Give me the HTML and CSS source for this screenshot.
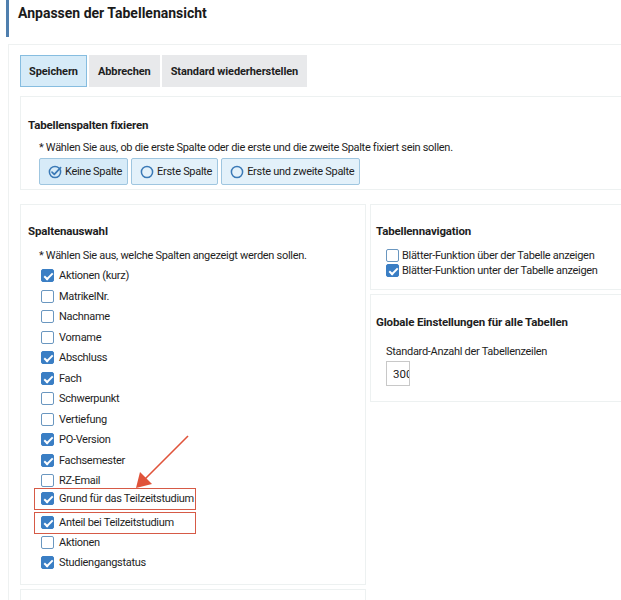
FILE: index.html
```html
<!DOCTYPE html>
<html lang="de">
<head>
<meta charset="utf-8">
<link rel="stylesheet" href="styles.css">
</head>
<body>
<header class="page-head"><h1>Anpassen der Tabellenansicht</h1></header>
<main class="outer">
  <div class="toolbar">
    <button class="btn btn-primary">Speichern</button>
    <button class="btn">Abbrechen</button>
    <button class="btn">Standard wiederherstellen</button>
  </div>
  <section class="panel panel-fix">
    <h2>Tabellenspalten fixieren</h2>
    <p class="hint">* Wählen Sie aus, ob die erste Spalte oder die erste und die zweite Spalte fixiert sein sollen.</p>
    <div class="radios">
      <span class="radio active"><svg class="ri" viewBox="0 0 14 14" width="14" height="14"><circle cx="7" cy="7" r="5.6" fill="none" stroke="#3a79b6" stroke-width="1.5"/><path d="M4 7.2 L6.3 9.4 L12.6 2.6" fill="none" stroke="#3a79b6" stroke-width="1.7" stroke-linecap="round" stroke-linejoin="round"/></svg>Keine Spalte</span>
      <span class="radio"><svg class="ri" viewBox="0 0 14 14" width="14" height="14"><circle cx="7" cy="7" r="5.6" fill="none" stroke="#3a79b6" stroke-width="1.5"/></svg>Erste Spalte</span>
      <span class="radio"><svg class="ri" viewBox="0 0 14 14" width="14" height="14"><circle cx="7" cy="7" r="5.6" fill="none" stroke="#3a79b6" stroke-width="1.5"/></svg>Erste und zweite Spalte</span>
    </div>
  </section>
  <div class="cols">
    <section class="panel panel-cols">
      <h2>Spaltenauswahl</h2>
      <p class="hint">* Wählen Sie aus, welche Spalten angezeigt werden sollen.</p>
      <ul class="checks">
        <li><span class="cb on"></span>Aktionen (kurz)</li>
        <li><span class="cb"></span>MatrikelNr.</li>
        <li><span class="cb"></span>Nachname</li>
        <li><span class="cb"></span>Vorname</li>
        <li><span class="cb on"></span>Abschluss</li>
        <li><span class="cb on"></span>Fach</li>
        <li><span class="cb"></span>Schwerpunkt</li>
        <li><span class="cb"></span>Vertiefung</li>
        <li><span class="cb on"></span>PO-Version</li>
        <li><span class="cb on"></span>Fachsemester</li>
        <li><span class="cb"></span>RZ-Email</li>
        <li class="marked marked1"><span class="cb on"></span>Grund für das Teilzeitstudium</li>
        <li class="marked marked2"><span class="cb on"></span>Anteil bei Teilzeitstudium</li>
        <li class="after-marked"><span class="cb"></span>Aktionen</li>
        <li><span class="cb on"></span>Studiengangstatus</li>
      </ul>
      <svg class="arrow" width="70" height="70" viewBox="0 0 70 70"><path d="M62 4 L18 48" stroke="#e0533a" stroke-width="1.6" fill="none"/><path d="M10 56 L14 40 L26 52 Z" fill="#e0533a"/></svg>
    </section>
    <div class="side">
      <section class="panel panel-nav">
        <h2>Tabellennavigation</h2>
        <ul class="checks tight">
          <li><span class="cb"></span>Blätter-Funktion über der Tabelle anzeigen</li>
          <li><span class="cb on"></span>Blätter-Funktion unter der Tabelle anzeigen</li>
        </ul>
      </section>
      <section class="panel panel-glob">
        <h2>Globale Einstellungen für alle Tabellen</h2>
        <label class="field-label" for="rows">Standard-Anzahl der Tabellenzeilen</label>
        <input id="rows" class="num" type="text" value="300">
      </section>
    </div>
  </div>
  <section class="panel panel-bottom"></section>
</main>
</body>
</html>
```
FILE: styles.css
```css
* { box-sizing: border-box; }
html, body { margin: 0; padding: 0; background: #fff; }
body {
  font-family: Roboto, "Liberation Sans", Arial, sans-serif;
  font-size: 11px;
  letter-spacing: -0.3px;
  color: #1e1e1e;
  width: 621px;
  height: 600px;
  overflow: hidden;
}
.page-head {
  margin-left: 6px;
  border-left: 3px solid #4f7fae;
  height: 37px;
  padding: 4px 0 0 9px;
}
.page-head h1 {
  margin: 0;
  font-size: 14px;
  font-weight: bold;
  letter-spacing: 0;
  color: #1a1a1a;
  line-height: 18px;
}
.outer {
  margin: 7px 0 0 8px;
  border: 1px solid #eef1f1;
  border-right: none;
  padding: 10px 0 0 11px;
  height: 560px;
  overflow: hidden;
}
.toolbar { display: flex; gap: 2px; }
.btn {
  font-family: inherit;
  font-size: 11px;
  letter-spacing: -0.1px;
  font-weight: bold;
  color: #1e1e1e;
  background: #e8e9eb;
  border: 1px solid #e8e9eb;
  height: 32px;
  padding: 0 8px;
  margin: 0;
}
.btn-primary {
  background: #d6ebf8;
  border-color: #86bde0;
}
.panel {
  border: 1px solid #edf1f1;
  background: #fff;
}
.panel h2 {
  font-size: 11.5px;
  font-weight: bold;
  letter-spacing: -0.15px;
  margin: 0;
  line-height: 16px;
}
.hint { margin: 0; line-height: 16px; white-space: nowrap; }
.panel-fix {
  margin-top: 9px;
  border-right: none;
  padding: 20px 0 9px 7px;
  height: 94px;
}
.panel-fix .hint { margin: 7px 0 0 11px; }
.radios { display: flex; gap: 3px; margin: 2px 0 0 11px; }
.radio {
  display: flex;
  align-items: center;
  gap: 3px;
  height: 27px;
  padding: 0 5px 0 8px;
  background: #e3f1fa;
  border: 1px solid #9fc6e0;
  border-radius: 2px;
  color: #222;
  white-space: nowrap;
}
.radio.active { background: #d7ebf8; }
.cols {
  display: flex;
  gap: 4px;
  margin-top: 14px;
}
.panel-cols {
  position: relative;
  width: 346px;
  height: 381px;
  flex: none;
  padding: 18px 0 0 7px;
}
.panel-cols .hint { margin: 9px 0 0 11px; }
.checks { list-style: none; margin: 1.5px 0 0 13px; padding: 0; }
.checks li {
  display: flex;
  align-items: center;
  height: 20.5px;
  gap: 5px;
  white-space: nowrap;
}
.cb {
  width: 13px;
  height: 13px;
  border: 1px solid #6a97c0;
  border-radius: 2px;
  background: #fff;
  flex: none;
  position: relative;
}
.cb.on { background: #3a7ec4; border-color: #3a7ec4; }
.cb.on::after {
  content: "";
  position: absolute;
  left: 3.5px;
  top: 1px;
  width: 3px;
  height: 7px;
  border: solid #fff;
  border-width: 0 2px 2px 0;
  transform: rotate(45deg);
}
.checks li.marked { position: relative; }
.checks li.marked::before {
  content: "";
  position: absolute;
  left: -7px;
  top: -1px;
  width: 160px;
  height: 20px;
  border: 1.5px solid #d65a46;
  pointer-events: none;
}
.checks li.marked1 { margin-top: -2.5px; }
.checks li.marked2 { margin-top: 3.5px; }
.checks li.marked2::before { width: 160px; top: -0.5px; }
.checks li.after-marked { margin-top: -1px; }
.arrow {
  position: absolute;
  left: 105px;
  top: 227px;
}
.side { flex: 1; display: flex; flex-direction: column; gap: 4px; min-width: 0; }
.panel-nav {
  height: 86px;
  border-right: none;
  padding: 18px 0 0 5px;
}
.checks.tight { margin: 9px 0 0 10px; }
.checks.tight li { height: 15px; gap: 3px; }
.panel-glob {
  height: 108px;
  border-right: none;
  padding: 19px 0 0 5px;
}
.field-label { display: block; margin: 14px 0 0 10px; line-height: 16px; white-space: nowrap; }
.num {
  display: block;
  margin: 1px 0 0 10px;
  width: 24px;
  height: 25px;
  border: 1px solid #c8c8c8;
  font-family: inherit;
  font-size: 11.5px;
  padding: 0 0 0 6px;
  color: #222;
}
.panel-bottom {
  margin-top: 4px;
  width: 346px;
  height: 20px;
}
```
